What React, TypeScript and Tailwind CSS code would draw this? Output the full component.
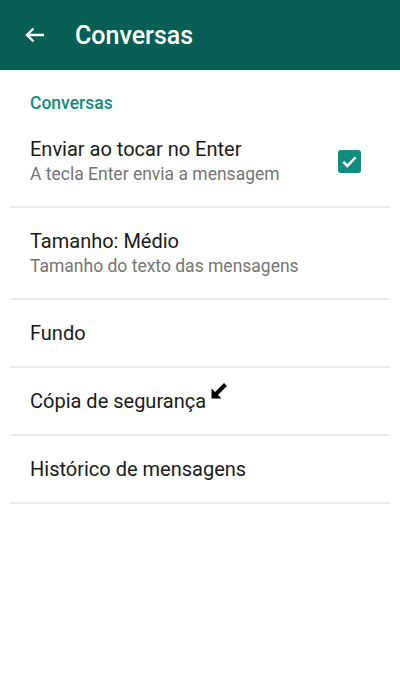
const rows = [
	{ title: "Enviar ao tocar no Enter", subtitle: "A tecla Enter envia a mensagem", checked: true },
	{ title: "Tamanho: Médio", subtitle: "Tamanho do texto das mensagens" },
	{ title: "Fundo" },
	{ title: "Cópia de segurança", cursor: true },
	{ title: "Histórico de mensagens" },
];

const BackArrow = () => (
	<svg width="20" height="16" viewBox="0 0 20 16" fill="none">
		<path d="M19 8H2M8.5 1.5L2 8l6.5 6.5" stroke="white" strokeWidth="2.4" />
	</svg>
);

const Checkbox = () => (
	<div className="flex h-[23px] w-[23px] items-center justify-center rounded-[3px] bg-[#128c7e]">
		<svg width="17" height="17" viewBox="0 0 16 16" fill="none">
			<path d="M2.2 8.4l3.7 3.7L13.8 4.2" stroke="white" strokeWidth="2.4" />
		</svg>
	</div>
);

const Cursor = () => (
	<svg className="absolute left-[201px] top-[15px]" width="16" height="16" viewBox="0 0 16 16">
		<polygon points="0.5,15.5 0.5,5.5 10.5,15.5" fill="black" />
		<line x1="4" y1="12" x2="14.5" y2="1.5" stroke="black" strokeWidth="4" />
	</svg>
);

export default function App() {
	return (
		<div className="min-h-[680px] w-[400px] bg-white font-['Roboto',sans-serif]">
			<header className="flex h-[70px] items-center bg-[#075e54] text-white">
				<div className="ml-[25px] mr-[30px] flex items-center">
					<BackArrow />
				</div>
				<h1 className="text-[25px] font-medium leading-none">Conversas</h1>
			</header>
			<p className="px-[30px] pt-[22px] pb-[2px] text-[17.5px] leading-[22px] font-medium text-[#128c7e]">
				Conversas
			</p>
			<div className="mx-[10px]">
				{rows.map((row) => (
					<div key={row.title} className="border-b-2 border-[#ebebeb]">
						<div
							className={`relative flex items-center px-5 ${row.subtitle ? "h-[90px]" : "h-[66px]"}`}
						>
							<div className="flex-1">
								<p className="text-[20px] leading-[26px] text-[#1a1a1a]">{row.title}</p>
								{row.subtitle && (
									<p className="text-[17.5px] leading-[24px] text-[#757575]">{row.subtitle}</p>
								)}
							</div>
							{row.checked && (
								<div className="mr-[9px]">
									<Checkbox />
								</div>
							)}
							{row.cursor && <Cursor />}
						</div>
					</div>
				))}
			</div>
		</div>
	);
}
